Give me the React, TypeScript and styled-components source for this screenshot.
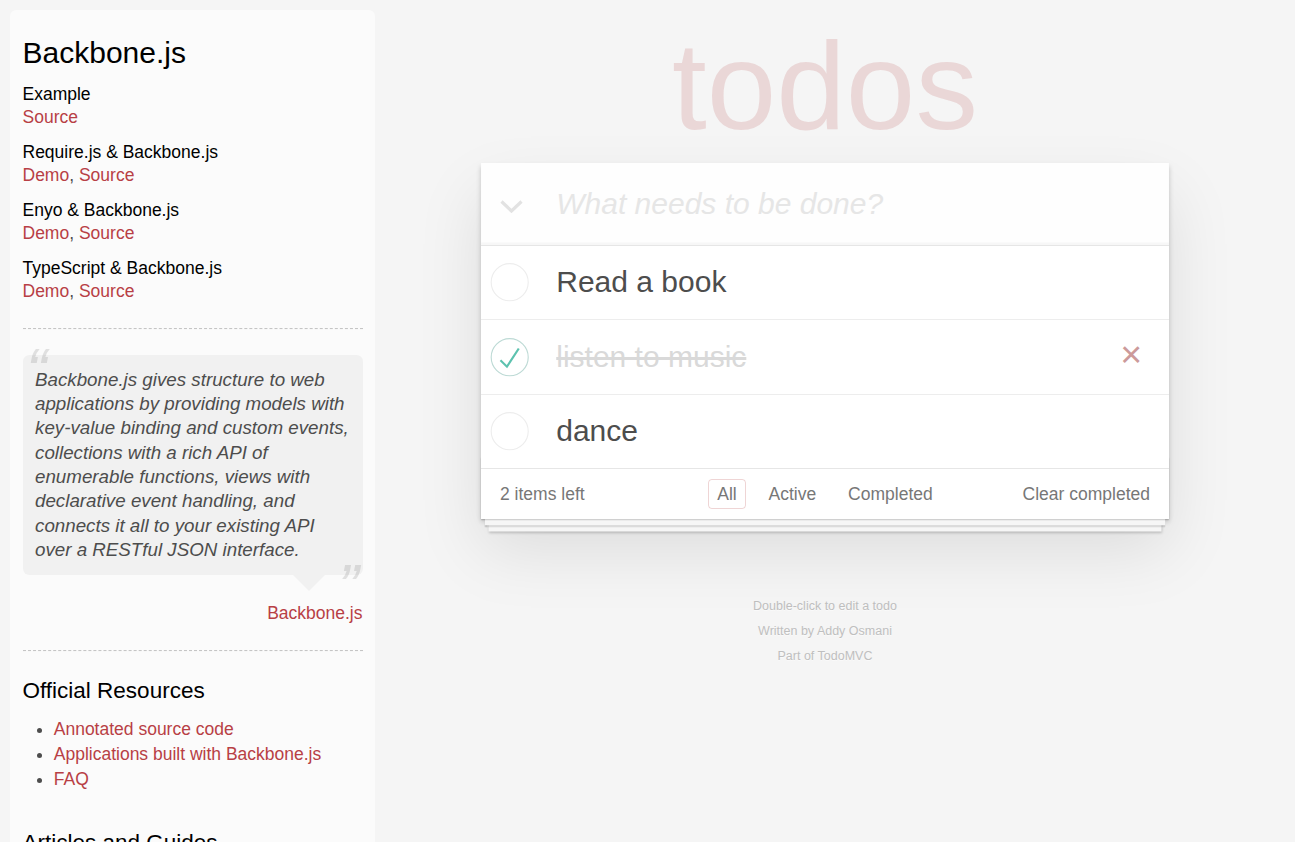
import React from "react";
import styled, { createGlobalStyle } from "styled-components";

const GlobalStyle = createGlobalStyle`
  html,
  body {
    margin: 0;
    padding: 0;
  }

  body {
    background: #f5f5f5;
    color: #4d4d4d;
    font-family: "Liberation Sans", Helvetica, Arial, sans-serif;
    font-size: 17.5px;
    line-height: 24.5px;
    font-weight: 300;
  }
`;

const Page = styled.div`
  display: flex;
  align-items: flex-start;
  padding-right: 20px;
`;

/* ---------- learn sidebar ---------- */

const Sidebar = styled.aside`
  flex: 0 0 365px;
  box-sizing: border-box;
  margin: 10px 0 0 10px;
  padding: 12.5px;
  border-radius: 6.25px;
  background: rgba(255, 255, 255, 0.6);
`;

const SideTitle = styled.h3`
  margin: 12.5px 0;
  font-size: 30px;
  font-weight: normal;
  line-height: 1.2;
  color: #000;
`;

const ExampleName = styled.h5`
  margin: 12.5px 0 0;
  font-size: 17.5px;
  font-weight: normal;
  line-height: 1.2;
  color: #000;
`;

const ExampleLinks = styled.div`
  line-height: 24.5px;
`;

const SideLink = styled.a`
  color: #b83f45;
  text-decoration: none;
`;

const Rule = styled.hr`
  height: 0;
  margin: 25px 0;
  border: 0;
  border-top: 1px dashed #c5c5c5;
  border-bottom: 1px dashed #f7f7f7;
`;

const Quote = styled.figure`
  margin: 25px 0 0;
`;

const Bubble = styled.blockquote`
  position: relative;
  margin: 0;
  padding: 12.5px;
  border-radius: 6.25px;
  background: rgba(0, 0, 0, 0.04);

  &::after {
    content: "";
    position: absolute;
    top: 100%;
    right: 37.5px;
    border: 16.25px solid transparent;
    border-top-color: rgba(0, 0, 0, 0.04);
  }
`;

const QuoteText = styled.p`
  margin: 0;
  font-size: 18.75px;
  line-height: 1.3;
  font-style: italic;

  &::before,
  &::after {
    position: absolute;
    font-size: 62.5px;
    opacity: 0.15;
  }

  &::before {
    content: "“";
    top: -25px;
    left: 3.75px;
  }

  &::after {
    content: "”";
    bottom: -52.5px;
    right: 3.75px;
  }
`;

const QuoteSource = styled.figcaption`
  padding-top: 25.5px;
  text-align: right;
  line-height: 24.5px;
`;

const SectionTitle = styled.h4`
  margin: 12.5px 0;
  font-size: 22.5px;
  font-weight: normal;
  line-height: 1.2;
  color: #000;
`;

const LinkList = styled.ul`
  margin: 0 0 37.5px 31.25px;
  padding: 0;

  li {
    line-height: 25px;
  }
`;

const SideFooter = styled.em`
  display: block;
  line-height: 24.5px;
`;

/* ---------- todo app ---------- */

const Main = styled.main`
  flex: 1;
  min-width: 0;
`;

const Column = styled.div`
  width: 687.5px;
  margin: 0 auto;
`;

const Title = styled.h1`
  margin: 0;
  padding-top: 7.5px;
  height: 155px;
  font-size: 125px;
  line-height: 155px;
  font-weight: 100;
  text-align: center;
  color: rgba(175, 47, 47, 0.15);
`;

const Card = styled.section`
  position: relative;
  background: #fff;
  box-shadow: 0 2.5px 5px 0 rgba(0, 0, 0, 0.2),
    0 31.25px 62.5px 0 rgba(0, 0, 0, 0.1);
`;

const Header = styled.header`
  display: flex;
  align-items: center;
  height: 82px;
  background: rgba(0, 0, 0, 0.003);
  box-shadow: inset 0 -2.5px 1.25px rgba(0, 0, 0, 0.03);
`;

const ToggleAll = styled.label`
  flex: 0 0 75px;
  box-sizing: border-box;
  display: flex;
  align-items: center;
  padding: 5px 0 0 19px;

  svg {
    display: block;
  }
`;

const NewTodo = styled.input`
  flex: 1;
  min-width: 0;
  box-sizing: border-box;
  height: 82px;
  padding: 20px 20px 20px 0;
  border: none;
  outline: none;
  background: transparent;
  font-family: inherit;
  font-size: 30px;
  font-weight: 300;
  line-height: 42px;
  color: #4d4d4d;

  &::placeholder {
    font-style: italic;
    font-weight: 300;
    color: #e6e6e6;
  }
`;

const TodoList = styled.ul`
  margin: 0;
  padding: 0;
  list-style: none;
  border-top: 1px solid #e6e6e6;
`;

const TodoItem = styled.li`
  display: flex;
  align-items: center;
  font-size: 30px;
  border-bottom: 1px solid #ededed;

  &:last-child {
    border-bottom: none;
  }

  svg {
    display: block;
    flex-shrink: 0;
  }
`;

const TodoLabel = styled.label<{ $done?: boolean }>`
  flex: 1;
  padding: 18.75px 18.75px 18.75px 25px;
  line-height: 36px;
  color: ${({ $done }) => ($done ? "#d9d9d9" : "#4d4d4d")};
  text-decoration: ${({ $done }) => ($done ? "line-through" : "none")};
`;

const Destroy = styled.button`
  display: flex;
  align-items: center;
  justify-content: center;
  width: 50px;
  height: 50px;
  margin: 0 12.5px 6px 0;
  padding: 0;
  border: none;
  background: none;
  font-family: inherit;
  font-size: 37.5px;
  line-height: 50px;
  color: #cc9a9a;
`;

const Footer = styled.footer`
  position: relative;
  box-sizing: border-box;
  display: grid;
  grid-template-columns: 1fr auto 1fr;
  grid-template-rows: 25px;
  align-items: center;
  height: 51px;
  padding: 12.5px 18.75px;
  border-top: 1px solid #e6e6e6;
  color: #777;

  &::before {
    content: "";
    position: absolute;
    right: 0;
    bottom: 0;
    left: 0;
    height: 62.5px;
    overflow: hidden;
    box-shadow: 0 1.25px 1.25px rgba(0, 0, 0, 0.2),
      0 10px 0 -3.75px #f6f6f6, 0 11.25px 1.25px -3.75px rgba(0, 0, 0, 0.2),
      0 20px 0 -7.5px #f6f6f6, 0 21.25px 2.5px -7.5px rgba(0, 0, 0, 0.2);
    pointer-events: none;
  }
`;

const Count = styled.span`
  position: relative;
  justify-self: start;
  line-height: 25px;

  strong {
    font-weight: 300;
  }
`;

const Filters = styled.ul`
  position: relative;
  display: flex;
  gap: 4.86px;
  margin: 0;
  padding: 0;
  list-style: none;
`;

const FilterLink = styled.a<{ $selected?: boolean }>`
  display: block;
  margin: 3.75px;
  padding: 3.75px 8.75px;
  border: 1px solid
    ${({ $selected }) => ($selected ? "rgba(175, 47, 47, 0.2)" : "transparent")};
  border-radius: 3.75px;
  line-height: 20px;
  color: inherit;
  text-decoration: none;
`;

const ClearCompleted = styled.button`
  position: relative;
  justify-self: end;
  padding: 0;
  border: none;
  background: none;
  font: inherit;
  line-height: 25px;
  color: inherit;
`;

const Info = styled.footer`
  margin-top: 81.25px;
  font-size: 12.5px;
  color: #bfbfbf;
  text-align: center;
  text-shadow: 0 1.25px 0 rgba(255, 255, 255, 0.5);

  p {
    margin: 0 0 12.5px;
    line-height: 12.5px;
  }
`;

const Circle = ({ done }: { done?: boolean }) => (
  <svg width="50" height="50" viewBox="-10 -18 100 135">
    <circle
      cx="50"
      cy="50"
      r="50"
      fill="none"
      stroke={done ? "#bddad5" : "#ededed"}
      strokeWidth="3"
    />
    {done && (
      <path fill="#5dc2af" d="M72 25L42 71 27 56l-4 4 20 20 34-52z" />
    )}
  </svg>
);

const examples = [
  { name: "Example", links: ["Source"] },
  { name: "Require.js & Backbone.js", links: ["Demo", "Source"] },
  { name: "Enyo & Backbone.js", links: ["Demo", "Source"] },
  { name: "TypeScript & Backbone.js", links: ["Demo", "Source"] },
];

const todos = [
  { title: "Read a book", done: false },
  { title: "listen to music", done: true },
  { title: "dance", done: false },
];

const App = () => (
  <>
    <GlobalStyle />
    <Page>
      <Sidebar>
        <SideTitle>Backbone.js</SideTitle>
        {examples.map((ex) => (
          <div key={ex.name}>
            <ExampleName>{ex.name}</ExampleName>
            <ExampleLinks>
              {ex.links.map((l, i) => (
                <React.Fragment key={l}>
                  {i > 0 && ", "}
                  <SideLink href="#">{l}</SideLink>
                </React.Fragment>
              ))}
            </ExampleLinks>
          </div>
        ))}
        <Rule />
        <Quote>
          <Bubble>
            <QuoteText>
              Backbone.js gives structure to web applications by providing
              models with key-value binding and custom events, collections with
              a rich API of enumerable functions, views with declarative event
              handling, and connects it all to your existing API over a RESTful
              JSON interface.
            </QuoteText>
          </Bubble>
          <QuoteSource>
            <SideLink href="#">Backbone.js</SideLink>
          </QuoteSource>
        </Quote>
        <Rule />
        <SectionTitle>Official Resources</SectionTitle>
        <LinkList>
          <li>
            <SideLink href="#">Annotated source code</SideLink>
          </li>
          <li>
            <SideLink href="#">Applications built with Backbone.js</SideLink>
          </li>
          <li>
            <SideLink href="#">FAQ</SideLink>
          </li>
        </LinkList>
        <SectionTitle>Articles and Guides</SectionTitle>
        <LinkList>
          <li>
            <SideLink href="#">Developing Backbone.js Applications</SideLink>
          </li>
          <li>
            <SideLink href="#">Collection of tutorials</SideLink>
          </li>
          <li>
            <SideLink href="#">Backbone patterns</SideLink>
          </li>
        </LinkList>
        <SectionTitle>Community</SectionTitle>
        <LinkList>
          <li>
            <SideLink href="#">Backbone.js on Stack Overflow</SideLink>
          </li>
          <li>
            <SideLink href="#">Google Groups mailing list</SideLink>
          </li>
          <li>
            <SideLink href="#">Backbone.js on Twitter</SideLink>
          </li>
        </LinkList>
        <Rule />
        <SideFooter>
          If you have other helpful links to share, or find any of the links
          above no longer work, please <SideLink href="#">let us know</SideLink>.
        </SideFooter>
      </Sidebar>

      <Main>
        <Column>
          <Title>todos</Title>
          <Card>
            <Header>
              <ToggleAll>
                <svg width="23" height="13" viewBox="0 0 23 13">
                  <polyline
                    points="1.5,1.5 11.5,11 21.5,1.5"
                    fill="none"
                    stroke="#e2e2e2"
                    strokeWidth="3.2"
                  />
                </svg>
              </ToggleAll>
              <NewTodo placeholder="What needs to be done?" />
            </Header>
            <TodoList>
              {todos.map((t) => (
                <TodoItem key={t.title}>
                  <Circle done={t.done} />
                  <TodoLabel $done={t.done}>{t.title}</TodoLabel>
                  {t.done && <Destroy>×</Destroy>}
                </TodoItem>
              ))}
            </TodoList>
            <Footer>
              <Count>
                <strong>2</strong> items left
              </Count>
              <Filters>
                <li>
                  <FilterLink href="#" $selected>
                    All
                  </FilterLink>
                </li>
                <li>
                  <FilterLink href="#">Active</FilterLink>
                </li>
                <li>
                  <FilterLink href="#">Completed</FilterLink>
                </li>
              </Filters>
              <ClearCompleted>Clear completed</ClearCompleted>
            </Footer>
          </Card>
          <Info>
            <p>Double-click to edit a todo</p>
            <p>Written by Addy Osmani</p>
            <p>Part of TodoMVC</p>
          </Info>
        </Column>
      </Main>
    </Page>
  </>
);

export default App;
